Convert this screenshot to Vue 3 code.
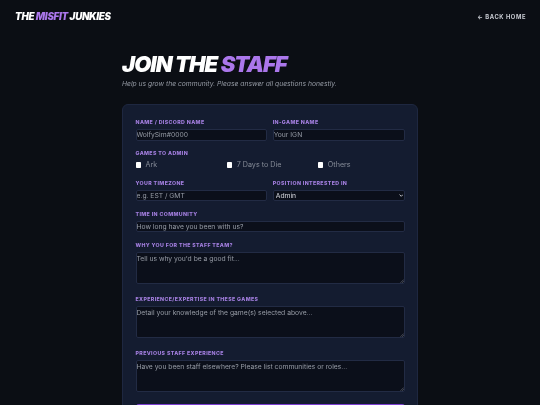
<script setup>
const games = ['Ark', '7 Days to Die', 'Others']
const areas = [
  { label: 'Why you for the staff team?', ph: "Tell us why you'd be a good fit..." },
  { label: 'Experience/Expertise in these games', ph: "Detail your knowledge of the game(s) selected above..." },
  { label: 'Previous staff experience', ph: 'Have you been staff elsewhere? Please list communities or roles...' },
]
</script>

<template>
  <div class="page">
    <header class="top">
      <div class="logo">THE <span class="accent">MISFIT</span> JUNKIES</div>
      <a class="back">← BACK HOME</a>
    </header>
    <main class="wrap">
      <h1 class="title">JOIN THE <span class="accent">STAFF</span></h1>
      <p class="sub">Help us grow the community. Please answer all questions honestly.</p>
      <form class="card">
        <div class="two">
          <div class="field">
            <label>Name / Discord Name</label>
            <input type="text" placeholder="WolfySim#0000" />
          </div>
          <div class="field">
            <label>In-Game Name</label>
            <input type="text" placeholder="Your IGN" />
          </div>
        </div>
        <div class="field">
          <label>Games to Admin</label>
          <div class="checks">
            <div v-for="g in games" :key="g" class="check">
              <span class="box"></span>
              <span>{{ g }}</span>
            </div>
          </div>
        </div>
        <div class="two">
          <div class="field">
            <label>Your Timezone</label>
            <input type="text" placeholder="e.g. EST / GMT" />
          </div>
          <div class="field">
            <label>Position Interested In</label>
            <div class="control">
              <select><option>Admin</option></select>
              <svg class="chev" viewBox="0 0 6 4" width="4.5" height="3">
                <path d="M.7.8 3 3.1 5.3.8" fill="none" stroke="#e2e4ea" stroke-width="1.1" />
              </svg>
            </div>
          </div>
        </div>
        <div class="field">
          <label>Time in Community</label>
          <input type="text" placeholder="How long have you been with us?" />
        </div>
        <div v-for="a in areas" :key="a.label" class="field">
          <label>{{ a.label }}</label>
          <div class="control area">
            <textarea :placeholder="a.ph"></textarea>
            <svg class="grip" viewBox="0 0 4 4" width="4" height="4">
              <path d="M.5 3.8 3.8.5M2.2 3.8 3.8 2.2" fill="none" stroke="#767b88" stroke-width=".6" />
            </svg>
          </div>
        </div>
        <button type="button" class="submit"></button>
      </form>
    </main>
  </div>
</template>

<style>
html, body { margin: 0; background: #0b0e14; overflow: hidden; }
</style>

<style scoped>
.page {
  width: 540px;
  height: 405px;
  overflow: hidden;
  background: #0b0e14;
  font-family: Inter, "Liberation Sans", sans-serif;
  color: #fff;
  will-change: transform;
}
.top {
  display: flex;
  align-items: center;
  justify-content: space-between;
  height: 33px;
  padding: 0 14px 0 15px;
}
.logo {
  font-size: 9.75px;
  font-weight: 900;
  font-style: italic;
  letter-spacing: -0.03em;
}
.accent { color: #ab77eb; }
.back {
  font-size: 5.8px;
  font-weight: 700;
  letter-spacing: 0.1em;
  color: #c9ccd3;
}
.wrap {
  width: 296px;
  margin: 0 auto;
  padding-top: 18px;
}
.title {
  margin: 0;
  font-size: 22px;
  line-height: 27px;
  font-weight: 900;
  font-style: italic;
  letter-spacing: -0.045em;
}
.sub {
  margin: 1px 0 0;
  font-size: 6.75px;
  line-height: 10px;
  font-style: italic;
  color: #959aa4;
}
.card {
  display: flex;
  flex-direction: column;
  gap: 9.5px;
  margin-top: 15px;
  padding: 14px 12.5px;
  background: #141c30;
  border: 0.75px solid #1e2740;
  border-radius: 6px;
}
.two {
  display: grid;
  grid-template-columns: 1fr 1fr;
  gap: 5.5px;
}
.field {
  display: flex;
  flex-direction: column;
  min-width: 0;
}
label {
  font-size: 5.25px;
  line-height: 7px;
  font-weight: 800;
  letter-spacing: 0.07em;
  text-transform: uppercase;
  color: #a47fe0;
  margin-bottom: 3px;
}
input, textarea, select {
  box-sizing: border-box;
  width: 100%;
  margin: 0;
  background: #0b0f1a;
  border: 0.75px solid #222b44;
  border-radius: 2px;
  color: #d8dae0;
  font-family: Inter, "Liberation Sans", sans-serif;
  font-size: 6.75px;
  outline: none;
}
input {
  height: 11.5px;
  padding: 0;
}
select {
  display: block;
  height: 11.5px;
  padding: 0 0 0 2px;
  appearance: none;
}
textarea {
  display: block;
  height: 32px;
  padding: 1.5px 0;
  resize: none;
}
input::placeholder, textarea::placeholder { color: #979ca6; opacity: 1; }
.control { position: relative; }
.area { margin-bottom: 2.5px; }
.chev { position: absolute; right: 1.5px; top: 4.25px; }
.grip { position: absolute; right: 0.5px; bottom: 0.5px; }
.checks {
  display: grid;
  grid-template-columns: repeat(3, 1fr);
  gap: 4.5px;
}
.check {
  display: flex;
  align-items: center;
  gap: 4.5px;
  font-size: 7.2px;
  line-height: 10px;
  color: #858b97;
}
.box {
  width: 5.5px;
  height: 5.5px;
  background: #fff;
  border-radius: 0.75px;
}
.submit {
  height: 24px;
  flex: none;
  border: 0;
  border-radius: 3px;
  background: #7c3fd0;
}
</style>
